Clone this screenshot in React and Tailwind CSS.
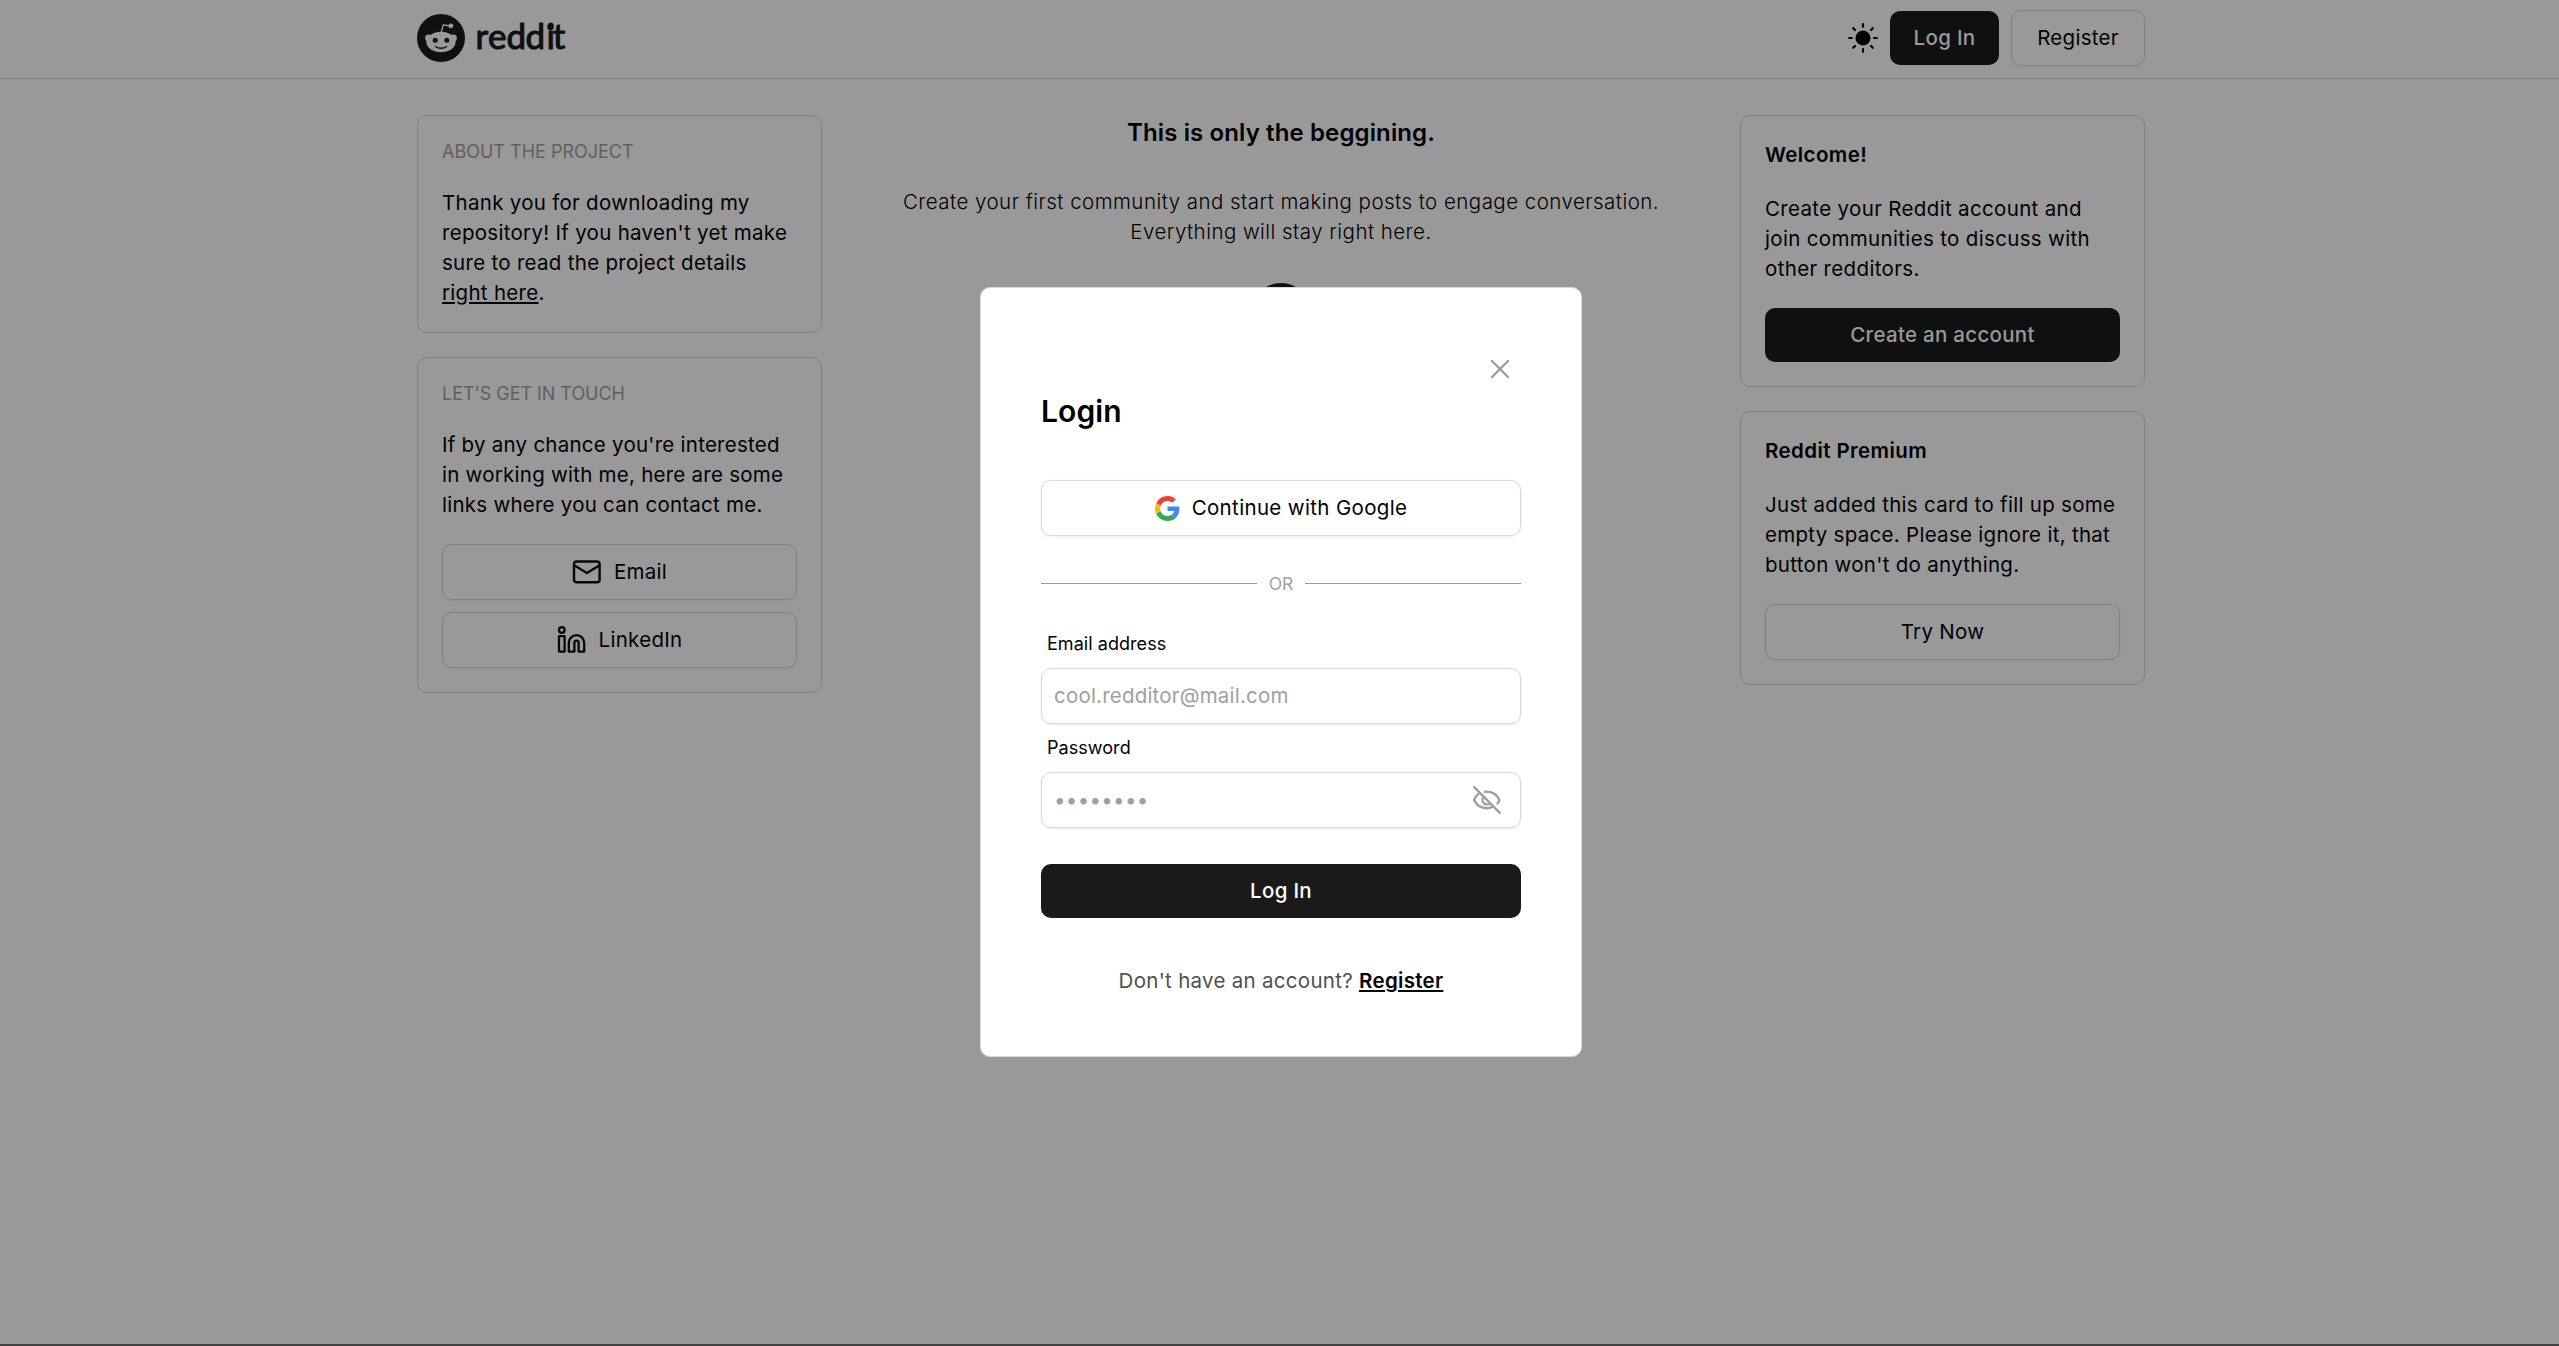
const Card = ({ children, className = '' }) => (
  <section className={'rounded-[10px] border border-[#818181] px-6 ' + className}>{children}</section>
);

const outline =
  'flex items-center justify-center gap-3 rounded-[10px] border border-[#818181] shadow-[0_1px_3px_rgba(0,0,0,0.05)]';
const solid =
  'flex items-center justify-center rounded-[10px] bg-[#101010] text-[#999999] font-medium';

function RedditMark({ className }) {
  return (
    <svg viewBox="0 0 48 48" className={className}>
      <circle cx="24" cy="24" r="24" fill="#101010" />
      <path d="M24.3 18.5 L26.2 10.8 L34 12" fill="none" stroke="#999" strokeWidth="1.3" strokeLinejoin="round" />
      <circle cx="33.9" cy="11.9" r="2.4" fill="#999" />
      <circle cx="11.7" cy="24" r="3.6" fill="#999" />
      <circle cx="36.3" cy="24" r="3.6" fill="#999" />
      <ellipse cx="24" cy="28" rx="14.6" ry="10.2" fill="#999" />
      <circle cx="18.2" cy="26.3" r="2.5" fill="#101010" />
      <circle cx="29.8" cy="26.3" r="2.5" fill="#101010" />
      <path d="M18.3 32.5 Q24 36 29.7 32.5" fill="none" stroke="#101010" strokeWidth="1.3" strokeLinecap="round" />
    </svg>
  );
}

function Wordmark() {
  return (
    <svg viewBox="0 0 96 40" className="ml-[9px] h-10 w-24 overflow-visible tracking-normal">
      <text x="1.5 14 32.5 51.5 72.4 78.8" y="31.2" fontFamily="Lato" fontSize="35" fontWeight="400" fill="#101010" stroke="#101010" strokeWidth="1.1" strokeLinejoin="round">reddit</text>
      <circle cx="76.5" cy="9" r="3.2" fill="#101010" />
    </svg>
  );
}

function Sun() {
  return (
    <svg viewBox="0 0 30 30" className="mr-3 h-[30px] w-[30px]" stroke="#000" strokeWidth="2.2" strokeLinecap="round">
      <circle cx="15" cy="15" r="7.5" stroke="none" />
      <path d="M15 1.2v2.6M15 26.2v2.6M1.2 15h2.6M26.2 15h2.6M5.2 5.2l1.8 1.8M23 23l1.8 1.8M5.2 24.8l1.8-1.8M23 7l1.8-1.8" />
    </svg>
  );
}

function Mail() {
  return (
    <svg viewBox="0 0 30 30" className="h-[30px] w-[30px]" fill="none" stroke="#080808" strokeWidth="2.4" strokeLinejoin="round" strokeLinecap="round">
      <rect x="2" y="4.5" width="25.6" height="20.8" rx="2.6" />
      <path d="M2.5 8.5 L15 16 L27.2 8.5" />
    </svg>
  );
}

function LinkedIn() {
  return (
    <svg viewBox="0 0 30 30" className="h-[30px] w-[30px]" fill="none" stroke="#080808" strokeWidth="2.3" strokeLinejoin="round">
      <circle cx="4.8" cy="5" r="2.8" />
      <path d="M2 11.2h5.6v15.4H2z" />
      <path d="M11.8 26.6V17.8a7.7 7.7 0 0 1 15.4 0V26.6H21.6V17.8a2.1 2.1 0 0 0-4.2 0V26.6z" />
    </svg>
  );
}

function Google() {
  return (
    <svg viewBox="0 0 48 48" className="h-[25px] w-[25px]">
      <path fill="#EA4335" d="M24 9.500c3.540 0 6.710 1.220 9.210 3.600l6.850-6.850C35.900 2.380 30.470 0 24 0 14.620 0 6.510 5.380 2.560 13.220l7.980 6.190C12.430 13.720 17.740 9.500 24 9.500z" />
      <path fill="#4285F4" d="M46.980 24.550c0-1.570-.15-3.090-.38-4.550H24v9.020h12.940c-.58 2.960-2.260 5.480-4.780 7.180l7.730 6c4.510-4.180 7.090-10.360 7.090-17.650z" />
      <path fill="#FBBC05" d="M10.530 28.590c-.48-1.450-.76-2.990-.76-4.590s.27-3.140.76-4.590l-7.980-6.190C.92 16.460 0 20.120 0 24c0 3.880.92 7.540 2.560 10.780l7.970-6.190z" />
      <path fill="#34A853" d="M24 48c6.480 0 11.930-2.130 15.890-5.810l-7.730-6c-2.150 1.450-4.920 2.300-8.160 2.300-6.260 0-11.570-4.220-13.470-9.910l-7.980 6.190C6.510 42.620 14.620 48 24 48z" />
    </svg>
  );
}

function EyeOff() {
  return (
    <svg viewBox="0 0 30 30" className="h-[30px] w-[30px]" fill="none" stroke="#a0a0a0" strokeWidth="2.4" strokeLinecap="round">
      <path d="M2.2 2.2 L27.8 27.8" />
      <path d="M13 6.8a13.5 13.5 0 0 1 14.500 8.200q-.8 2-2 3.400" />
      <path d="M6.6 8.600Q3.200 11.500 2.200 15a13.500 13.500 0 0 0 18.800 6.600" />
      <path d="M11.8 12a4.300 4.300 0 1 0 6.200 6.200" />
    </svg>
  );
}

export default function App() {
  return (
    <div className="relative flex h-[1346px] w-[2559px] flex-col overflow-hidden bg-[#999999] font-['Inter',sans-serif] text-[20.5px] leading-[30px] tracking-[0.29px] text-black">
      <header className="h-[79px] shrink-0 border-b border-[#818181]">
        <div className="ml-[417px] flex h-[76px] w-[1728px] items-center">
          <RedditMark className="h-12 w-12" />
          <Wordmark />
          <div className="flex-1" />
          <Sun />
          <button className={solid + ' h-[54px] w-[109px]'}>Log In</button>
          <button className={outline + ' ml-3 h-14 w-[134px]'}>Register</button>
        </div>
      </header>

      <main className="ml-[417px] flex w-[1728px] flex-1 items-start justify-between pt-9">
        <aside className="flex w-[405px] flex-col gap-6">
          <Card className="h-[218px]">
            <h3 className="mt-[23px] text-[18px] leading-[26px] tracking-normal text-[#606060]">ABOUT THE PROJECT</h3>
            <p className="mt-[23px]">
              Thank you for downloading my<br />repository! If you haven't yet make<br />sure to read the project details<br />
              <a className="underline">right here</a>.
            </p>
          </Card>
          <Card className="h-[336px]">
            <h3 className="mt-[23px] text-[18px] leading-[26px] tracking-[-0.05px] text-[#606060]">LET'S GET IN TOUCH</h3>
            <p className="mt-[23px] tracking-[0.25px]">
              If by any chance you're interested<br />in working with me, here are some<br />links where you can contact me.
            </p>
            <button className={outline + ' mt-6 h-14 w-full'}><Mail />Email</button>
            <button className={outline + ' mt-3 h-14 w-full'}><LinkedIn />LinkedIn</button>
          </Card>
        </aside>

        <div className="flex flex-1 flex-col items-center text-center">
          <h1 className="mt-[2px] text-[24px] font-semibold leading-[32px] tracking-[0.12px]">This is only the beggining.</h1>
          <p className="mt-[38px] font-light tracking-[0.46px]">
            Create your first community and start making posts to engage conversation.<br />Everything will stay right here.
          </p>
          <RedditMark className="mt-[36px] h-[60px] w-[60px]" />
        </div>

        <aside className="flex w-[405px] flex-col gap-6">
          <Card className="h-[272px]">
            <h2 className="mt-6 font-semibold tracking-[0.4px]">Welcome!</h2>
            <p className="mt-6 tracking-[0.34px]">Create your Reddit account and<br />join communities to discuss with<br />other redditors.</p>
            <button className={solid + ' mt-6 h-[54px] w-full'}>Create an account</button>
          </Card>
          <Card className="h-[274px]">
            <h2 className="mt-6 font-semibold tracking-[0.4px]">Reddit Premium</h2>
            <p className="mt-6">Just added this card to fill up some<br />empty space. Please ignore it, that<br />button won't do anything.</p>
            <button className={outline + ' mt-6 h-14 w-full'}>Try Now</button>
          </Card>
        </aside>
      </main>

      <div className="h-[2px] shrink-0 bg-[#444244]" />

      <div className="absolute left-[980px] top-[287px] flex h-[770px] w-[602px] flex-col rounded-[10px] border border-[#dadada] bg-white px-[60px]">
        <svg viewBox="0 0 18 20" className="mt-[71px] mr-3 h-5 w-[18px] self-end" stroke="#999" strokeWidth="2.2" strokeLinecap="round">
          <path d="M1 2 L17 18 M17 2 L1 18" />
        </svg>
        <h2 className="mt-[10px] text-[30px] font-semibold leading-[45px] tracking-[0.1px]">Login</h2>
        <button className="mt-[46px] flex h-14 w-full shrink-0 items-center justify-center gap-3 rounded-[10px] border border-[#d9d9d9] tracking-[0.35px] shadow-[0_1px_3px_rgba(0,0,0,0.08)]">
          <Google />Continue with Google
        </button>
        <div className="mt-[34px] flex items-center gap-3 text-[17.5px] leading-[27px] tracking-normal text-[#a0a0a0]">
          <div className="h-px flex-1 bg-[#999]" />OR<div className="h-px flex-1 bg-[#999]" />
        </div>
        <label className="mt-[34px] pl-[6px] text-[18px] leading-[26px] tracking-[0.05px]">Email address</label>
        <div className="mt-[11px] flex h-14 w-full items-center rounded-[10px] border border-[#d9d9d9] px-3 tracking-[0.2px] text-[#a0a0a0] shadow-[0_1px_3px_rgba(0,0,0,0.08)]">cool.redditor@mail.com</div>
        <label className="mt-[11px] pl-[6px] text-[18px] leading-[26px] tracking-[0.05px]">Password</label>
        <div className="mt-[11px] flex h-14 w-full items-center justify-between rounded-[10px] border border-[#d9d9d9] pl-3 pr-[18px] text-[#a0a0a0] shadow-[0_1px_3px_rgba(0,0,0,0.08)]">
          <span>••••••••</span>
          <EyeOff />
        </div>
        <button className="mt-9 h-[54px] w-full rounded-[10px] bg-[#1a1a1a] font-medium text-white">Log In</button>
        <p className="mt-12 text-center text-[#505050]">
          Don't have an account? <a className="font-semibold text-black underline">Register</a>
        </p>
      </div>
    </div>
  );
}
